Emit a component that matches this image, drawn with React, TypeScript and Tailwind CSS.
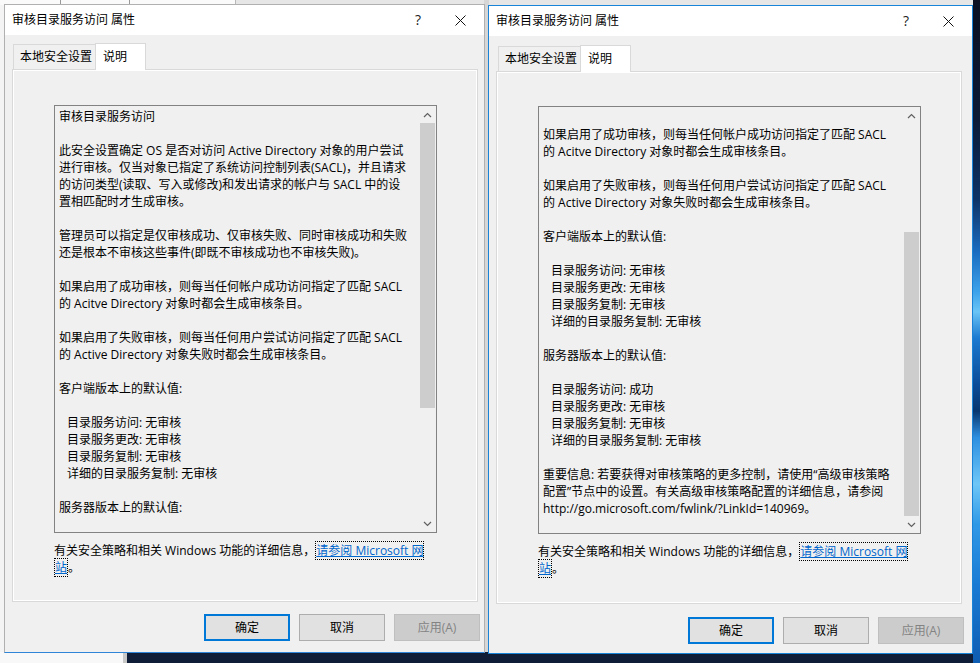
import React from "react";

type Line = { t: string; i?: boolean };

const leftLines: Line[] = [
  { t: "审核目录服务访问" },
  { t: "" },
  { t: "此安全设置确定 OS 是否对访问 Active Directory 对象的用户尝试" },
  { t: "进行审核。仅当对象已指定了系统访问控制列表(SACL)，并且请求" },
  { t: "的访问类型(读取、写入或修改)和发出请求的帐户与 SACL 中的设" },
  { t: "置相匹配时才生成审核。" },
  { t: "" },
  { t: "管理员可以指定是仅审核成功、仅审核失败、同时审核成功和失败" },
  { t: "还是根本不审核这些事件(即既不审核成功也不审核失败)。" },
  { t: "" },
  { t: "如果启用了成功审核，则每当任何帐户成功访问指定了匹配 SACL" },
  { t: "的 Acitve Directory 对象时都会生成审核条目。" },
  { t: "" },
  { t: "如果启用了失败审核，则每当任何用户尝试访问指定了匹配 SACL" },
  { t: "的 Active Directory 对象失败时都会生成审核条目。" },
  { t: "" },
  { t: "客户端版本上的默认值:" },
  { t: "" },
  { t: "目录服务访问: 无审核", i: true },
  { t: "目录服务更改: 无审核", i: true },
  { t: "目录服务复制: 无审核", i: true },
  { t: "详细的目录服务复制: 无审核", i: true },
  { t: "" },
  { t: "服务器版本上的默认值:" },
  { t: "" },
];

const rightLines: Line[] = [
  { t: "" },
  { t: "如果启用了成功审核，则每当任何帐户成功访问指定了匹配 SACL" },
  { t: "的 Acitve Directory 对象时都会生成审核条目。" },
  { t: "" },
  { t: "如果启用了失败审核，则每当任何用户尝试访问指定了匹配 SACL" },
  { t: "的 Active Directory 对象失败时都会生成审核条目。" },
  { t: "" },
  { t: "客户端版本上的默认值:" },
  { t: "" },
  { t: "目录服务访问: 无审核", i: true },
  { t: "目录服务更改: 无审核", i: true },
  { t: "目录服务复制: 无审核", i: true },
  { t: "详细的目录服务复制: 无审核", i: true },
  { t: "" },
  { t: "服务器版本上的默认值:" },
  { t: "" },
  { t: "目录服务访问: 成功", i: true },
  { t: "目录服务更改: 无审核", i: true },
  { t: "目录服务复制: 无审核", i: true },
  { t: "详细的目录服务复制: 无审核", i: true },
  { t: "" },
  { t: "重要信息: 若要获得对审核策略的更多控制，请使用“高级审核策略" },
  { t: "配置”节点中的设置。有关高级审核策略配置的详细信息，请参阅" },
  { t: "http://go.microsoft.com/fwlink/?LinkId=140969。" },
];

function Chevron({ down }: { down?: boolean }) {
  return (
    <svg width="9" height="6" viewBox="0 0 9 6">
      <polyline
        points={down ? "1,1 4.5,4.5 8,1" : "1,5 4.5,1.5 8,5"}
        fill="none"
        stroke="#606060"
        strokeWidth="1.2"
      />
    </svg>
  );
}

function renderLine(l: Line, k: number) {
  return (
    <div key={k} className={l.i ? "h-[17px] pl-[8px]" : "h-[17px]"}>
      {l.t}
    </div>
  );
}

function TextBox({ lines, thumbClass, boxClass }: { lines: Line[]; thumbClass: string; boxClass: string }) {
  return (
    <div className={boxClass}>
      <div className="flex-1 overflow-hidden whitespace-pre pl-[4px] pt-[2px] text-[12px] leading-[17px] text-black">
        {lines.map(renderLine)}
      </div>
      <div className="flex w-[17px] flex-col bg-[#f0f0f0]">
        <div className="flex h-[17px] items-center justify-center">
          <Chevron />
        </div>
        <div className="flex flex-1 flex-col px-[1px]">
          <div className={thumbClass} />
        </div>
        <div className="flex h-[17px] items-center justify-center">
          <Chevron down />
        </div>
      </div>
    </div>
  );
}

function CloseIcon() {
  return (
    <svg width="11" height="11" viewBox="0 0 11 11">
      <line x1="0.5" y1="0.5" x2="10.5" y2="10.5" stroke="#111" strokeWidth="1" />
      <line x1="10.5" y1="0.5" x2="0.5" y2="10.5" stroke="#111" strokeWidth="1" />
    </svg>
  );
}

function Dialog({
  frameClass,
  bodyPt,
  tabsPl,
  lines,
  thumbClass,
  boxMt,
  btnMt,
}: {
  frameClass: string;
  bodyPt: string;
  tabsPl: string;
  lines: Line[];
  thumbClass: string;
  boxMt: string;
  btnMt: string;
}) {
  return (
    <div className={frameClass}>
      <div className="flex h-[30px] items-center bg-white pl-[7px] text-[12px] text-black">
        <span className="flex-1">审核目录服务访问 属性</span>
        <span className="mr-[34px] text-[14px] leading-none text-[#222]">?</span>
        <span className="mr-[18px] flex items-center">
          <CloseIcon />
        </span>
      </div>
      <div className={bodyPt}>
        <div className={tabsPl}>
          <div className="flex h-[25px] w-[82px] items-center border-l border-t border-[#d9d9d9] bg-[#f0f0f0] pl-[6px] text-[12px]">
            本地安全设置
          </div>
          <div className="relative z-10 -mb-[1px] flex h-[27px] w-[51px] items-center self-end border-l border-r border-t border-[#d9d9d9] bg-white pb-[1px] pl-[7px] text-[12px]">
            说明
          </div>
        </div>
        <div className="ml-[7px] flex h-[533px] w-[466px] flex-col border border-[#d9d9d9] bg-[#f0f0f0] pl-[41px] shadow-[inset_1px_1px_0_#ffffff,inset_-1px_-1px_0_#ffffff]">
          <div className={boxMt}>
            <TextBox
              lines={lines}
              thumbClass={thumbClass}
              boxClass="flex h-[428px] w-[383px] border border-[#828282] bg-[#f0f0f0]"
            />
          </div>
          <div className="mt-[9px] whitespace-pre text-[12px] leading-[17px] text-black">
            <div className="h-[17px]">
              有关安全策略和相关 Windows 功能的详细信息，
              <span className="border border-dotted border-black text-[#0066cc] underline decoration-[#0066cc]">
                请参阅 Microsoft 网
              </span>
            </div>
            <div className="h-[17px]">
              <span className="border border-dotted border-black text-[#0066cc] underline decoration-[#0066cc]">站</span>。
            </div>
          </div>
        </div>
        <div className={btnMt}>
          <button className="flex h-[27px] w-[86px] items-center justify-center border-2 border-[#0078d7] bg-[#e1e1e1] text-[12px] text-black">
            确定
          </button>
          <button className="flex h-[27px] w-[86px] items-center justify-center border border-[#adadad] bg-[#e1e1e1] text-[12px] text-black">
            取消
          </button>
          <button className="flex h-[27px] w-[86px] items-center justify-center border border-[#bfbfbf] bg-[#cccccc] text-[12px] text-[#838383]">
            应用(A)
          </button>
        </div>
      </div>
    </div>
  );
}

export default function App() {
  return (
    <div className="relative h-[663px] w-[980px] overflow-hidden bg-[#e6e6e6] font-['Open_Sans','Noto_Sans_CJK_SC',sans-serif]">
      <div className="absolute left-0 top-0 h-[663px] w-[6px] bg-[#f4f4f4]" />
      <div className="absolute left-0 top-0 flex h-[5px] w-[236px] border-r border-[#b8b8b8] bg-[#fafafa] pl-[60px]">
        <span className="h-[5px] w-[70px] border-l border-r border-[#999]" />
      </div>
      <div className="absolute left-[484px] top-0 h-[663px] w-[5px] bg-[#d6d6d6]" />
      <div className="absolute left-0 top-[652px] flex h-[11px] w-[980px]">
        <div className="h-full w-[127px] border-r-[4px] border-[#c8c8c8] bg-[#f8f8f8]" />
        <div className="h-full flex-1 bg-[#0f1e36]" />
      </div>
      <div className="absolute left-[973px] top-0 h-[663px] w-[7px] bg-[linear-gradient(180deg,#0a1022_0%,#0b1a36_18%,#0d3366_30%,#1a6cc0_38%,#3da2ea_44%,#69c4f6_47%,#1c7ad0_51%,#0b4c98_58%,#08376f_62%,#2d8fe0_66%,#6ec6f7_73%,#3099e6_79%,#1a7bd4_88%,#0e5db2_100%)]" />

      <div className="absolute left-[4px] top-[4px]">
        <Dialog
          frameClass="flex h-[649px] w-[481px] flex-col border border-[#b0b0b0] border-b-[#2f86d8] bg-[#f0f0f0]"
          bodyPt="flex flex-1 flex-col pt-[9px]"
          tabsPl="flex h-[25px] items-end pl-[8px]"
          lines={leftLines}
          thumbClass="h-[285px] w-full bg-[#cdcdcd]"
          boxMt="mt-[35px]"
          btnMt="mt-[12px] flex gap-[9px] pl-[199px]"
        />
      </div>

      <div className="absolute left-[488px] top-[5px]">
        <Dialog
          frameClass="flex h-[649px] w-[485px] flex-col border border-[#1883d7] bg-[#f0f0f0]"
          bodyPt="flex flex-1 flex-col pt-[10px]"
          tabsPl="flex h-[25px] items-end pl-[9px]"
          lines={rightLines}
          thumbClass="mt-[108px] h-[284px] w-full bg-[#cdcdcd]"
          boxMt="mt-[34px]"
          btnMt="mt-[13px] flex gap-[9px] pl-[199px]"
        />
      </div>
    </div>
  );
}
